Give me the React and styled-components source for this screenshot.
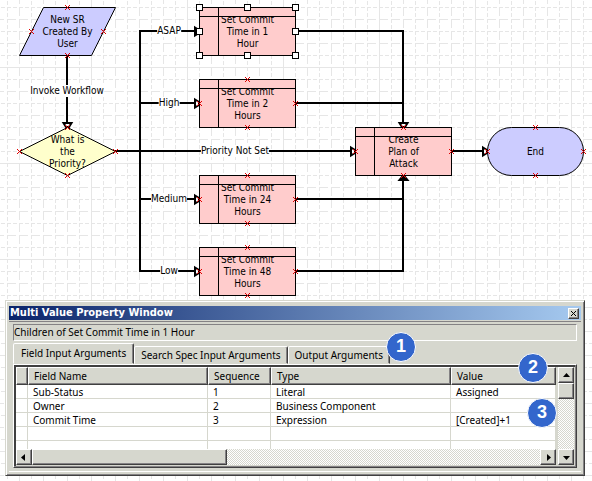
import React, { useState } from 'react'
import styled, { createGlobalStyle, css } from 'styled-components'

const steps = [
  { id: 'asap', x: 199, y: 7, text: ['Set Commit', 'Time in 1', 'Hour'], selected: true },
  { id: 'high', x: 199, y: 79, text: ['Set Commit', 'Time in 2', 'Hours'] },
  { id: 'medium', x: 199, y: 175, text: ['Set Commit', 'Time in 24', 'Hours'] },
  { id: 'low', x: 199, y: 247, text: ['Set Commit', 'Time in 48', 'Hours'] },
  { id: 'plan', x: 355, y: 127, text: ['Create', 'Plan of', 'Attack'] },
]

const linkLabels = [
  { text: 'Invoke Workflow', x: 67, y: 91 },
  { text: 'ASAP', x: 169, y: 31 },
  { text: 'High', x: 169, y: 103 },
  { text: 'Priority Not Set', x: 235, y: 151 },
  { text: 'Medium', x: 169, y: 199 },
  { text: 'Low', x: 169, y: 271 },
]

const rows = [
  ['Sub-Status', '1', 'Literal', 'Assigned'],
  ['Owner', '2', 'Business Component', ''],
  ['Commit Time', '3', 'Expression', '[Created]+1'],
  ['', '', '', ''],
  ['', '', '', ''],
]

const tabs = ['Field Input Arguments', 'Search Spec Input Arguments', 'Output Arguments']

function App() {
  const [tab, setTab] = useState(0)
  return (
    <Page>
      <GlobalStyle />
      <GridPaper />
      <Canvas>
        <Links />
        {linkLabels.map(l => <LinkLabel key={l.text} $x={l.x} $y={l.y}>{l.text}</LinkLabel>)}
        <Node $x={19} $y={7}>
          <Shape><polygon points="24.5,0.5 96.5,0.5 72.5,48.5 0.5,48.5" fill="#ccccff" stroke="#000" /></Shape>
          <NodeText>New SR<br />Created By<br />User</NodeText>
          <Marks points={[[48, 0], [12, 24], [84, 24], [48, 48]]} />
        </Node>
        <Node $x={19} $y={127}>
          <Shape><polygon points="48.5,0.5 96.5,24.5 48.5,48.5 0.5,24.5" fill="#ffffcc" stroke="#000" /></Shape>
          <NodeText>What is<br />the<br />Priority?</NodeText>
          <Marks />
        </Node>
        {steps.map(s => (
          <Node key={s.id} $x={s.x} $y={s.y}>
            <StepBox />
            <NodeText>{s.text[0]}<br />{s.text[1]}<br />{s.text[2]}</NodeText>
            <StepHeader />
            {s.selected ? <Handles /> : <Marks />}
          </Node>
        ))}
        <Node $x={487} $y={127}>
          <Shape><rect x="0.5" y="0.5" width="96" height="48" rx="24" fill="#ccccff" stroke="#000" /></Shape>
          <NodeText>End</NodeText>
          <Marks />
        </Node>
      </Canvas>

      <Window>
        <TitleBar>
          <Title>Multi Value Property Window</Title>
          <CloseButton aria-label="Close">
            <svg width="7" height="7"><path d="M1 1l5 5M6 1l-5 5" stroke="#000" /></svg>
          </CloseButton>
        </TitleBar>
        <Body>
          <Context>Children of Set Commit Time in 1 Hour</Context>
          <Tabs role="tablist">
            {tabs.map((t, i) => (
              <Tab key={t} role="tab" aria-selected={tab === i} $active={tab === i} onClick={() => setTab(i)}>{t}</Tab>
            ))}
          </Tabs>
          <Panel>
            <ListArea>
              <TableView>
                <Table>
                  <colgroup>
                    <Col $w={12} /><Col $w={180} /><Col $w={63} /><Col $w={180} /><col />
                  </colgroup>
                  <thead>
                    <tr>
                      <Th aria-label="Row" /><Th>Field Name</Th><Th>Sequence</Th><Th>Type</Th><Th>Value</Th>
                    </tr>
                  </thead>
                  <tbody>
                    {rows.map((r, i) => (
                      <tr key={i}>
                        <Td />
                        {r.map((c, j) => <Td key={j}>{c}</Td>)}
                      </tr>
                    ))}
                  </tbody>
                </Table>
              </TableView>
              <ScrollX>
                <ScrollButton aria-label="Scroll left"><Arrow d="M4 0v7L0 3.5z" /></ScrollButton>
                <ThumbX />
                <Spacer />
                <ScrollButton aria-label="Scroll right"><Arrow d="M2 0v7L6 3.5z" /></ScrollButton>
              </ScrollX>
            </ListArea>
            <ScrollY>
              <ScrollButton aria-label="Scroll up"><Arrow d="M0 5h7L3.5 1z" /></ScrollButton>
              <ThumbY />
              <Spacer />
              <ScrollButton aria-label="Scroll down"><Arrow d="M0 2h7L3.5 6z" /></ScrollButton>
            </ScrollY>
          </Panel>
        </Body>
        <Callout $right={168} $top={31}>1</Callout>
        <Callout $right={36} $top={52}>2</Callout>
        <Callout $right={27} $top={97}>3</Callout>
      </Window>
    </Page>
  )
}

export default App

// dashed drafting paper: 12px cells, a solid line every 96px
function GridPaper() {
  const lines = []
  for (let p = 0; p < 96; p += 12) {
    const dash = p === 0 ? undefined : p % 24 === 0 ? '9 3' : '4 2'
    lines.push(<path key={p} d={`M${p + 0.5} 0V96M0 ${p + 0.5}H96`} strokeDasharray={dash} />)
  }
  return (
    <Paper aria-hidden="true">
      <pattern id="paper" x="91" y="67" width="96" height="96" patternUnits="userSpaceOnUse">
        <g stroke="#e6e6e6" shapeRendering="crispEdges">{lines}</g>
      </pattern>
      <rect width="100%" height="100%" fill="url(#paper)" />
    </Paper>
  )
}

function Links() {
  return (
    <LinkLayer aria-hidden="true">
      <path
        d="M67 55V124M115 151H353M140 30V272M140 31H196M140 103H196M140 199H196M140 271H196M295 31H404M403 30V124M295 103H403M295 199H403M295 271H404M403 272V178M451 151H485"
        fill="none" stroke="#000" strokeWidth="2" shapeRendering="crispEdges"
      />
      <g fill="#fff" stroke="#000" strokeWidth="2">
        <path d="M63.500 123h8l-2.500 4h-3z" />
        <path d="M399.500 123h8l-2.500 4h-3z" />
        <path d="M399.500 180h8l-4 -5z" fill="#000" />
        <path d="M195 27.500v8l4 -2.500v-3z" fill="#000" />
        <path d="M195 99.500v8l4 -2.500v-3z" />
        <path d="M195 195.500v8l4 -2.500v-3z" />
        <path d="M195 267.500v8l4 -2.500v-3z" />
        <path d="M351 147.500v8l4 -2.500v-3z" />
        <path d="M483 147.500v8l4 -2.500v-3z" />
      </g>
    </LinkLayer>
  )
}

function Marks({ points = [[48, 0], [0, 24], [96, 24], [48, 48]] }) {
  return (
    <Shape stroke="#e00000" fill="none" aria-hidden="true">
      {points.map(([x, y]) => <path key={x + '-' + y} d={`M${x - 2} ${y - 2}l5 5M${x - 2} ${y + 3}l5 -5`} />)}
    </Shape>
  )
}

function Handles() {
  const pts = [[0, 0], [48, 0], [96, 0], [0, 24], [96, 24], [0, 48], [48, 48], [96, 48]]
  return (
    <Shape stroke="#000" fill="#fff" aria-hidden="true">
      {pts.map(([x, y]) => <rect key={x + '-' + y} x={x - 2.5} y={y - 2.5} width="6" height="6" />)}
    </Shape>
  )
}

const Arrow = ({ d }) => <svg width="7" height="7" aria-hidden="true"><path d={d} /></svg>

const GlobalStyle = createGlobalStyle`
  *{
    box-sizing:border-box;
  }
  body{
    margin:0;
    background:#fff;
    color:#000;
    font-family:'DejaVu Sans Condensed','DejaVu Sans',sans-serif;
    font-size:10px;
  }
  button{
    font:inherit;
    color:inherit;
    padding:0;
  }
`

const Page = styled.main`
  position:relative;
  min-height:100vh;
  overflow:hidden;
`
const Paper = styled.svg`
  position:absolute;
  inset:0;
  width:100%;
  height:100%;
`
const Canvas = styled.section`
  position:relative;
  height:300px;
`
const LinkLayer = styled.svg`
  position:absolute;
  inset:0;
  width:100%;
  height:100%;
`
const LinkLabel = styled.span`
  position:absolute;
  left:${p => p.$x}px;
  top:${p => p.$y}px;
  transform:translate(-50%,-50%);
  line-height:12px;
  background:#fff;
  white-space:nowrap;
`
const Node = styled.div`
  position:absolute;
  left:${p => p.$x}px;
  top:${p => p.$y}px;
  width:97px;
  height:49px;
  display:grid;
  place-items:center;
  > *{
    grid-area:1/1;
  }
`
const Shape = styled.svg`
  width:97px;
  height:49px;
  overflow:visible;
`
const NodeText = styled.div`
  line-height:12px;
  text-align:center;
`
const StepBox = styled.div`
  width:100%;
  height:100%;
  border:1px solid #000;
  background:linear-gradient(#000,#000) 18px 0/1px 100% no-repeat #ffcccc;
`
const StepHeader = styled.div`
  place-self:start stretch;
  height:10px;
  border:1px solid #000;
  background:linear-gradient(#000,#000) 18px 0/1px 100% no-repeat #ffcccc;
`

const Window = styled.section`
  position:relative;
  margin:0 7px 0 5px;
  padding:5px 3px 3px;
  font-family:'Noto Sans',sans-serif;
  background:#d6d7ce;
  border:1px solid;
  border-color:#d6d7ce #404040 #404040 #d6d7ce;
  box-shadow:inset 1px 1px #fff,inset -1px -1px #848284;
`
const TitleBar = styled.header`
  display:flex;
  align-items:center;
  justify-content:space-between;
  height:14px;
  padding:0 2px 0 1px;
  background:linear-gradient(90deg,#0a246a,#a6caf0);
`
const Title = styled.h1`
  margin:0;
  color:#fff;
  font-family:'DejaVu Sans Condensed','DejaVu Sans',sans-serif;
  font-size:11px;
  line-height:12px;
`
const raised = css`
  background:#d6d7ce;
  border:1px solid;
  border-color:#fff #404040 #404040 #fff;
  box-shadow:inset -1px -1px #848284;
`
const CloseButton = styled.button`
  ${raised}
  width:11px;
  height:11px;
  display:grid;
  place-items:center;
`
const Body = styled.div`
  margin-top:1px;
  padding:2px 4px 3px;
  border-top:1px solid #848284;
  border-bottom:1px solid #fff;
`
const Context = styled.div`
  height:17px;
  line-height:15px;
  border:1px solid;
  border-color:#848284 #fff #fff #848284;
  white-space:nowrap;
`
const Tabs = styled.div`
  display:flex;
  align-items:flex-end;
  height:21px;
  margin-top:2px;
`
const Tab = styled.button`
  height:${p => p.$active ? 21 : 18}px;
  padding:0 ${p => p.$active ? 7 : 6}px ${p => p.$active ? 2 : 0}px;
  line-height:14px;
  white-space:nowrap;
  background:#d6d7ce;
  border:1px solid;
  border-color:#fff #404040 transparent #fff;
  border-radius:2px 2px 0 0;
  box-shadow:inset -1px 0 #848284;
`
const Panel = styled.div`
  display:flex;
  border:1px solid;
  border-color:#fff #404040 #404040 #fff;
  padding:2px;
  box-shadow:inset -1px -1px #848284,inset 2px 2px #404040;
`
const ListArea = styled.div`
  flex:1;
  min-width:0;
`
const TableView = styled.div`
  height:82px;
  overflow:hidden;
  background:#fff;
`
const Table = styled.table`
  width:100%;
  table-layout:fixed;
  border-collapse:separate;
  border-spacing:0;
`
const Col = styled.col`
  width:${p => p.$w}px;
`
const Th = styled.th`
  height:18px;
  padding:0 5px;
  line-height:15px;
  font-weight:normal;
  text-align:left;
  background:#d6d7ce;
  border:1px solid;
  border-color:#fff #404040 #404040 #fff;
  box-shadow:inset -1px -1px #848284;
`
const Td = styled.td`
  height:14px;
  padding:1px 5px 0;
  line-height:12px;
  white-space:nowrap;
  border:solid #d6d7ce;
  border-width:0 1px 1px 0;
`
const dither = css`
  background:repeating-conic-gradient(#d6d7ce 0 25%,#fff 0 50%) 0 0/2px 2px;
`
const ScrollX = styled.div`
  ${dither}
  display:flex;
  height:16px;
`
const ScrollY = styled.div`
  ${dither}
  display:flex;
  flex-direction:column;
  width:16px;
  margin-left:2px;
`
const ScrollButton = styled.button`
  ${raised}
  flex:none;
  width:16px;
  height:16px;
  display:grid;
  place-items:center;
`
const ThumbX = styled.div`
  ${raised}
  width:195px;
`
const ThumbY = styled.div`
  ${raised}
  height:16px;
`
const Spacer = styled.div`
  flex:1;
`
const Callout = styled.span`
  position:absolute;
  right:${p => p.$right}px;
  top:${p => p.$top}px;
  width:30px;
  height:30px;
  border-radius:50%;
  background:#3366cc;
  border:1px solid #fff;
  color:#fff;
  font:bold 18px/26px 'Liberation Sans',Arial,sans-serif;
  text-align:center;
`
